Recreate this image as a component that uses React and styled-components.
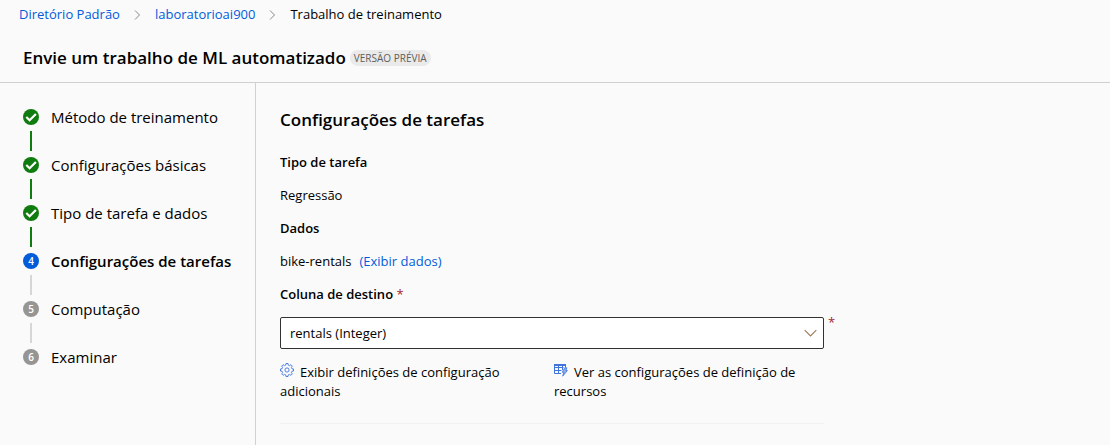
import React from "react";
import styled, { createGlobalStyle, css } from "styled-components";

const GlobalStyle = createGlobalStyle`
  * { box-sizing: border-box; }
  body {
    margin: 0;
    background: #fafafa;
    color: #000;
    font-family: "Open Sans", "Noto Sans", sans-serif;
    font-size: 13px;
    line-height: 19px;
  }
  h1, h2, h3, p, ol { margin: 0; padding: 0; }
  ol { list-style: none; }
`;

const Page = styled.div`
  display: flex;
  flex-direction: column;
  min-height: 100vh;
`;

const Link = styled.a`
  color: #015cda;
  text-decoration: none;
`;

const Breadcrumb = styled.nav`
  padding: 5px 19px 4px;

  ol {
    display: flex;
    align-items: center;
    gap: 14px;
  }
  li {
    display: flex;
    align-items: center;
    gap: 14px;
  }
  svg { display: block; }
`;

const TitleBar = styled.header`
  display: flex;
  align-items: center;
  gap: 4px;
  padding: 17px 23px 12px;
  border-bottom: 1px solid #d0d0d0;
`;

const Title = styled.h1`
  font-size: 17px;
  line-height: 25px;
  font-weight: 600;
`;

const Badge = styled.span`
  padding: 0 4px;
  border-radius: 8px;
  background: #eaeaea;
  color: #605e5c;
  font-size: 10px;
  line-height: 16px;
  font-weight: 500;
`;

const Body = styled.div`
  display: flex;
  flex: 1;
`;

const Sidebar = styled.nav`
  flex: 0 0 256px;
  padding: 26px 16px 16px 23px;
  border-right: 1px solid #d0d0d0;
`;

const Step = styled.li`
  display: grid;
  grid-template-columns: 16px 1fr;
  column-gap: 12px;
  font-size: 15px;
  line-height: 16px;
  font-weight: ${(p) => (p.$current ? 600 : 400)};
`;

const markerTone = {
  done: css`background: #107c10;`,
  current: css`background: #015cda;`,
  pending: css`background: #979593;`,
};

const Marker = styled.span`
  display: flex;
  align-items: center;
  justify-content: center;
  width: 16px;
  height: 16px;
  border-radius: 50%;
  color: #fff;
  font-size: 10px;
  line-height: 16px;
  font-weight: 600;
  ${(p) => markerTone[p.$state]}
`;

const Connector = styled.span`
  width: 2px;
  height: 20px;
  margin: 6px 7px;
  background: ${(p) => (p.$done ? "#107c10" : "#d8d6d4")};
`;

const Content = styled.main`
  flex: 1;
  min-width: 0;
  padding: 24px 24px 20px;
`;

const SectionTitle = styled.h2`
  margin-bottom: 20px;
  font-size: 17px;
  line-height: 26px;
  font-weight: 600;
`;

const Details = styled.div`
  display: flex;
  flex-direction: column;
  gap: 14px;
  max-width: 544px;
`;

const Label = styled.h3`
  font-size: 13px;
  line-height: 19px;
  font-weight: 600;
`;

const DataRow = styled.p`
  display: flex;
  gap: 8px;
`;

const Field = styled.div`
  display: flex;
  flex-direction: column;
  gap: 13px;
`;

const Required = styled.span`
  color: #a4262c;
  font-weight: 400;
`;

const SelectBox = styled.div`
  position: relative;

  svg {
    position: absolute;
    right: 7px;
    top: 10px;
    pointer-events: none;
  }
`;

const Select = styled.select`
  display: block;
  width: 100%;
  height: 32px;
  padding: 0 32px 0 9px;
  border: 1px solid #323130;
  border-radius: 2px;
  background: #fff;
  color: #000;
  font: inherit;
  appearance: none;
`;

const OuterMark = styled(Required)`
  position: absolute;
  left: 100%;
  top: -4px;
  margin-left: 4px;
`;

const Actions = styled.div`
  display: grid;
  grid-template-columns: 1fr 1fr;
  gap: 4px;
  padding-bottom: 22px;
  border-bottom: 1px solid #f3f2f1;
`;

const Action = styled.button`
  padding: 0;
  border: 0;
  background: none;
  color: #000;
  font: inherit;
  text-align: left;
  cursor: pointer;

  svg {
    margin-right: 6px;
    vertical-align: baseline;
  }
`;

const Chevron = () => (
  <svg width="7" height="10" viewBox="0 0 7 10" fill="none" stroke="#8a8886" aria-hidden="true">
    <path d="M1 .5 5.500 5 1 9.500" />
  </svg>
);

const ChevronDown = () => (
  <svg width="13" height="12" viewBox="0 0 13 12" fill="none" stroke="#9a7b58" strokeWidth="1.1" aria-hidden="true">
    <path d="M.7 3.2 6.500 9l5.800-5.800" />
  </svg>
);

const Check = () => (
  <svg width="16" height="16" viewBox="0 0 16 16" fill="none" stroke="#fff" strokeWidth="2.2" aria-hidden="true">
    <path d="M3.300 8 6.600 11.200 12.900 5" />
  </svg>
);

const TOOTH_COUNT = 8;

const gearOutline = Array.from({ length: TOOTH_COUNT }, (_, i) => {
  const turn = (i * 360) / TOOTH_COUNT;
  return [
    [-14, 5.1],
    [-9, 6.6],
    [9, 6.6],
    [14, 5.1],
  ].map(([offset, radius]) => {
    const angle = ((turn + offset) * Math.PI) / 180;
    return `${(7 + radius * Math.sin(angle)).toFixed(2)},${(7 - radius * Math.cos(angle)).toFixed(2)}`;
  }).join(" ");
}).join(" ");

const GearIcon = () => (
  <svg width="14" height="14" viewBox="0 0 14 14" fill="none" stroke="#3f74dc" strokeWidth="0.9" aria-hidden="true">
    <polygon points={gearOutline} />
    <circle cx="7" cy="7" r="2.1" />
  </svg>
);

const TableBoltIcon = () => (
  <svg width="14" height="14" viewBox="0 0 14 14" fill="none" stroke="#3f74dc" aria-hidden="true">
    <path d="M.5 10.500V1.500h11v3M.5 10.500h6.500M.5 4.500h9M.5 7.500h7M4.500 2v8.500M8.500 2v5" />
    <path d="M0 2h12" strokeWidth="2" />
    <path d="M10.700 4.800h2.200l-1 2.700h1.500l-4.700 5.700 1.100-3.900H8.200z" fill="#8fb0f0" strokeWidth=".8" />
  </svg>
);

const trail = ["Diretório Padrão", "laboratorioai900"];

const steps = [
  { name: "Método de treinamento", state: "done" },
  { name: "Configurações básicas", state: "done" },
  { name: "Tipo de tarefa e dados", state: "done" },
  { name: "Configurações de tarefas", state: "current" },
  { name: "Computação", state: "pending" },
  { name: "Examinar", state: "pending" },
];

export default function App() {
  return (
    <Page>
      <GlobalStyle />
      <Breadcrumb>
        <ol>
          {trail.map((name) => (
            <li key={name}>
              <Link href="#">{name}</Link>
              <Chevron />
            </li>
          ))}
          <li>Trabalho de treinamento</li>
        </ol>
      </Breadcrumb>
      <TitleBar>
        <Title>Envie um trabalho de ML automatizado</Title>
        <Badge>VERSÃO PRÉVIA</Badge>
      </TitleBar>
      <Body>
        <Sidebar>
          <ol>
            {steps.map(({ name, state }, i) => (
              <Step key={name} $current={state === "current"}>
                <Marker $state={state}>{state === "done" ? <Check /> : i + 1}</Marker>
                <span>{name}</span>
                {i < steps.length - 1 && <Connector $done={state === "done"} />}
              </Step>
            ))}
          </ol>
        </Sidebar>
        <Content>
          <SectionTitle>Configurações de tarefas</SectionTitle>
          <Details>
            <Label>Tipo de tarefa</Label>
            <p>Regressão</p>
            <Label>Dados</Label>
            <DataRow>
              bike-rentals <Link href="#">(Exibir dados)</Link>
            </DataRow>
            <Field>
              <Label as="label" htmlFor="target">
                Coluna de destino <Required>*</Required>
              </Label>
              <SelectBox>
                <Select id="target" defaultValue="rentals">
                  <option value="rentals">rentals (Integer)</option>
                </Select>
                <ChevronDown />
                <OuterMark>*</OuterMark>
              </SelectBox>
            </Field>
            <Actions>
              <Action type="button">
                <GearIcon />
                Exibir definições de configuração adicionais
              </Action>
              <Action type="button">
                <TableBoltIcon />
                Ver as configurações de definição de recursos
              </Action>
            </Actions>
          </Details>
        </Content>
      </Body>
    </Page>
  );
}
